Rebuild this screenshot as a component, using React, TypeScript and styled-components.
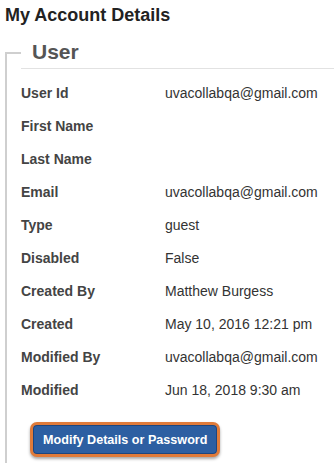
import { Fragment } from 'react';
import styled, { createGlobalStyle } from 'styled-components';

const GlobalStyle = createGlobalStyle`
  html, body {
    margin: 0;
    padding: 0;
    background: #fff;
    font-family: "Liberation Sans", Arial, sans-serif;
  }
`;

const Title = styled.h1`
  margin: 0;
  padding: 4px 5px;
  font-size: 18px;
  line-height: 22px;
  font-weight: bold;
  color: #222;
`;

const Group = styled.fieldset`
  margin: 7px 0 0 5px;
  padding: 0 0 8px 14px;
  min-width: 0;
  border: none;
  border-top: 2px solid #cfcfcf;
  border-left: 2px solid #cfcfcf;
`;

const Legend = styled.legend`
  box-sizing: border-box;
  width: 100%;
  margin: 0;
  padding: 3px 0 4px 11px;
  font-size: 21px;
  line-height: 24px;
  font-weight: bold;
  color: #555;
  border-bottom: 1px solid #e2e2e2;
`;

const Details = styled.dl`
  display: grid;
  grid-template-columns: 144px 1fr;
  grid-auto-rows: 33px;
  align-items: center;
  margin: 8px 0 0;
  font-size: 14px;
  line-height: 17px;
`;

const Label = styled.dt`
  font-weight: bold;
  color: #444;
`;

const Value = styled.dd`
  margin: 0;
  color: #333;
`;

const Actions = styled.div`
  padding: 15px 0 0 9px;
`;

const Button = styled.button`
  font-family: "Liberation Sans", Arial, sans-serif;
  font-size: 12.6px;
  font-weight: bold;
  color: #fff;
  background: #2d5fa2;
  height: 35px;
  padding: 0 10px;
  border: 3px solid #e07b3a;
  border-radius: 7px;
  box-shadow: inset 0 0 0 1px #1d467f, 0 2px 3px rgba(0, 0, 0, 0.35);
  cursor: pointer;
`;

const rows: [string, string][] = [
  ['User Id', 'uvacollabqa@gmail.com'],
  ['First Name', ''],
  ['Last Name', ''],
  ['Email', 'uvacollabqa@gmail.com'],
  ['Type', 'guest'],
  ['Disabled', 'False'],
  ['Created By', 'Matthew Burgess'],
  ['Created', 'May 10, 2016 12:21 pm'],
  ['Modified By', 'uvacollabqa@gmail.com'],
  ['Modified', 'Jun 18, 2018 9:30 am'],
];

export default function App() {
  return (
    <>
      <GlobalStyle />
      <Title>My Account Details</Title>
      <Group>
        <Legend>User</Legend>
        <Details>
          {rows.map(([label, value]) => (
            <Fragment key={label}>
              <Label>{label}</Label>
              <Value>{value}</Value>
            </Fragment>
          ))}
        </Details>
        <Actions>
          <Button>Modify Details or Password</Button>
        </Actions>
      </Group>
    </>
  );
}
